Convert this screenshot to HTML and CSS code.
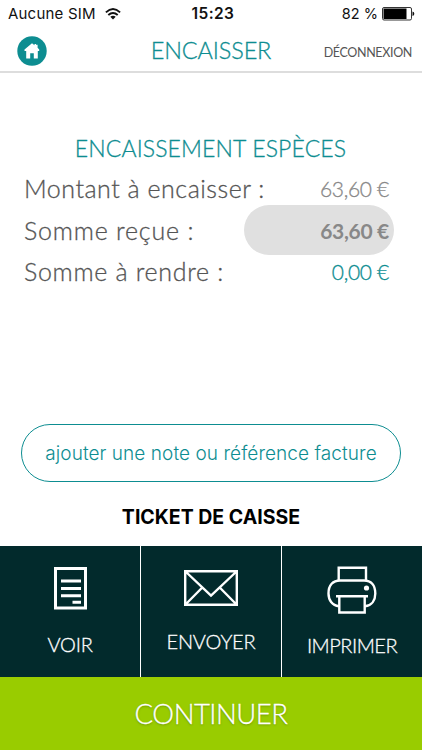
FILE: index.html
```html
<!DOCTYPE html>
<html lang="fr">
<head>
<meta charset="utf-8">
<title>Encaisser</title>
<link rel="stylesheet" href="styles.css">
</head>
<body>
<div class="status">
  <div class="carrier"><span>Aucune SIM</span>
    <svg class="wifi" width="16" height="12" viewBox="0 0 16 12"><g fill="none" stroke="#111" stroke-width="1.9"><path d="M.9 4.4Q8-2.2 15.1 4.4"/><path d="M3.3 7Q8 2.8 12.7 7"/></g><path d="M5.3 8.8Q8 6.6 10.7 8.8L8 11.6Z" fill="#111"/></svg>
  </div>
  <span class="clock">15:23</span>
  <div class="power"><span>82 %</span>
    <svg class="battery" width="33" height="14" viewBox="0 0 33 14"><rect x=".5" y=".5" width="29" height="12.5" rx="1.5" fill="#fff" stroke="#333"/><path d="M1.5 1.5H24.5V12H1.5Z" fill="#000"/><path d="M30.5 4.5Q32.3 5 32.3 6.8T30.5 9Z" fill="#111"/></svg>
  </div>
</div>
<header class="bar">
  <svg class="home" width="30" height="30" viewBox="0 0 30 30"><circle cx="15" cy="15" r="14.7" fill="#0d8d91"/><path d="M15 7.2L17.5 9.2V8H19V8.7H20.6V11.7L22.2 13.6V15H20.8V22.4H16.8V17.3H13.2V22.4H9.2V15H7.5V13.6Z" fill="#fff"/></svg>
  <h1 class="title"><span>ENCAISSER</span></h1>
  <span class="logout">DÉCONNEXION</span>
</header>
<main class="content">
  <h2 class="heading"><span>ENCAISSEMENT ESPÈCES</span></h2>
  <div class="row due"><span class="label">Montant à encaisser :</span><span class="amount">63,60 €</span></div>
  <div class="row received"><span class="label">Somme reçue :</span><span class="amount pill">63,60 €</span></div>
  <div class="row change"><span class="label">Somme à rendre :</span><span class="amount">0,00 €</span></div>
  <div class="note">ajouter une note ou référence facture</div>
  <h3 class="ticket">TICKET DE CAISSE</h3>
</main>
<nav class="actions">
  <div class="action view">
    <svg width="33" height="43" viewBox="0 0 33 43"><rect x="1.5" y="1.5" width="30" height="39.5" fill="none" stroke="#fff" stroke-width="3"/><path d="M7 14H27M7 21.5H27M7 28.8H27M18.5 35.3H27" stroke="#fff" stroke-width="3"/></svg>
    <span>VOIR</span>
  </div>
  <div class="action send">
    <svg width="54" height="36" viewBox="0 0 54 36"><path d="M1.2 1.2H52.8V34.8H1.2ZM1.5 1.5L27 25.5L52.5 1.5M1.5 34.5L18.3 17.5M52.5 34.5L35.7 17.5" fill="none" stroke="#fff" stroke-width="2.4"/></svg>
    <span>ENVOYER</span>
  </div>
  <div class="action print">
    <svg width="50" height="48" viewBox="0 0 50 48"><g fill="none" stroke="#fff" stroke-width="2.4"><path d="M11.7 14.5V1.7H39V14.5"/><path d="M12 40.2C5 39.5 1.5 34 1.5 27.5C1.5 19 6 14.5 13 14.5H37C44 14.5 48.3 19 48.3 27.5C48.3 34 45 39.5 38 40.2"/><path d="M9 30.3H41M12.3 30.3V46.5H37.7V30.3"/></g><circle cx="39.5" cy="22" r="2.6" fill="#fff"/></svg>
    <span>IMPRIMER</span>
  </div>
</nav>
<div class="continue"><span>CONTINUER</span></div>
</body>
</html>
```
FILE: styles.css
```css
* { box-sizing: border-box; }
body { margin: 0; width: 422px; height: 750px; display: flex; flex-direction: column; overflow: hidden; background: #fff; color: #555; font-family: Lato, sans-serif; font-weight: 300; }
h1, h2, h3 { margin: 0; font-weight: 300; }
span { white-space: nowrap; }
.status { height: 28px; display: grid; grid-template-columns: 1fr auto 1fr; align-items: center; padding: 0 8px; font: 400 14.5px/28px Inter, sans-serif; color: #111; }
.carrier, .power { display: flex; align-items: center; }
.carrier span { font-size: 15px; letter-spacing: .2px; }
.carrier { gap: 9px; }
.power { justify-content: flex-end; gap: 4px; margin-right: -1px; }
.clock { font-size: 15.5px; font-weight: 600; letter-spacing: .4px; margin-left: 4px; }
.bar { height: 45px; display: grid; grid-template-columns: 93px 1fr 100px; align-items: center; padding: 0 10px 0 17px; border-bottom: 2px solid #ddd; color: #0d8d91; }
.home { margin-top: 0; }
.title { font-size: 23.5px; line-height: 45px; text-align: center; letter-spacing: -.15px; -webkit-text-stroke: .3px; }
.logout { font-size: 12.5px; line-height: 20px; padding-top: 4px; letter-spacing: -.35px; font-weight: 400; color: #555; text-align: right; }
.content { height: 473px; display: flex; flex-direction: column; padding: 54px 21px 0 24px; }
.content > * { flex-shrink: 0; }
.heading { height: 40px; line-height: 42px; font-size: 23px; letter-spacing: .13px; margin-left: -4px; color: #0d8d91; text-align: center; -webkit-text-stroke: .3px; }
.row { display: flex; justify-content: space-between; align-items: center; font-size: 25px; padding-right: 7px; -webkit-text-stroke: .3px; }
.label { letter-spacing: .52px; }
.received .label { letter-spacing: .8px; }
.change .label { letter-spacing: .7px; }
.amount { font-size: 21px; letter-spacing: -.3px; padding-right: 5px; color: #888; }
.due { height: 38px; padding-top: 4px; }
.received { height: 50px; }
.change { height: 32px; }
.change .amount { color: #0d8d91; }
.pill { width: 150px; height: 50px; line-height: 52px; border-radius: 25px; background: #e0e0e0; text-align: right; font-weight: 700; -webkit-text-stroke: 0; }
.note { width: 380px; height: 58px; margin: 137px 0 0 -3px; border: 1.5px solid #0d8d91; border-radius: 29px; color: #0d8d91; font: 300 19px/57px Inter, sans-serif; letter-spacing: .07px; text-align: center; white-space: nowrap; }
.ticket { height: 60px; margin-left: -3px; color: #000; font: 700 19.5px/71px Inter, sans-serif; text-align: center; }
.actions { height: 131px; display: grid; grid-template-columns: 1fr 1fr 1fr; gap: 1px; background: #fff; }
.action { background: #022a2c; display: flex; flex-direction: column; align-items: center; color: #fff; font-size: 20px; line-height: 24px; -webkit-text-stroke: .3px; }
.view { padding-top: 21px; }
.view svg { margin-bottom: 22px; }
.send { padding-top: 24px; }
.send svg { margin-bottom: 23px; }
.print { padding-top: 20px; }
.print svg { margin-bottom: 19px; }
.print span { letter-spacing: -.5px; }
.view span, .send span { letter-spacing: -.2px; }
.continue { height: 73px; background: #9c0; color: #fff; text-align: center; font-size: 27.5px; letter-spacing: -.5px; line-height: 74px; -webkit-text-stroke: .3px; text-shadow: 0 1px 2px rgba(60,90,0,.5); }
```
